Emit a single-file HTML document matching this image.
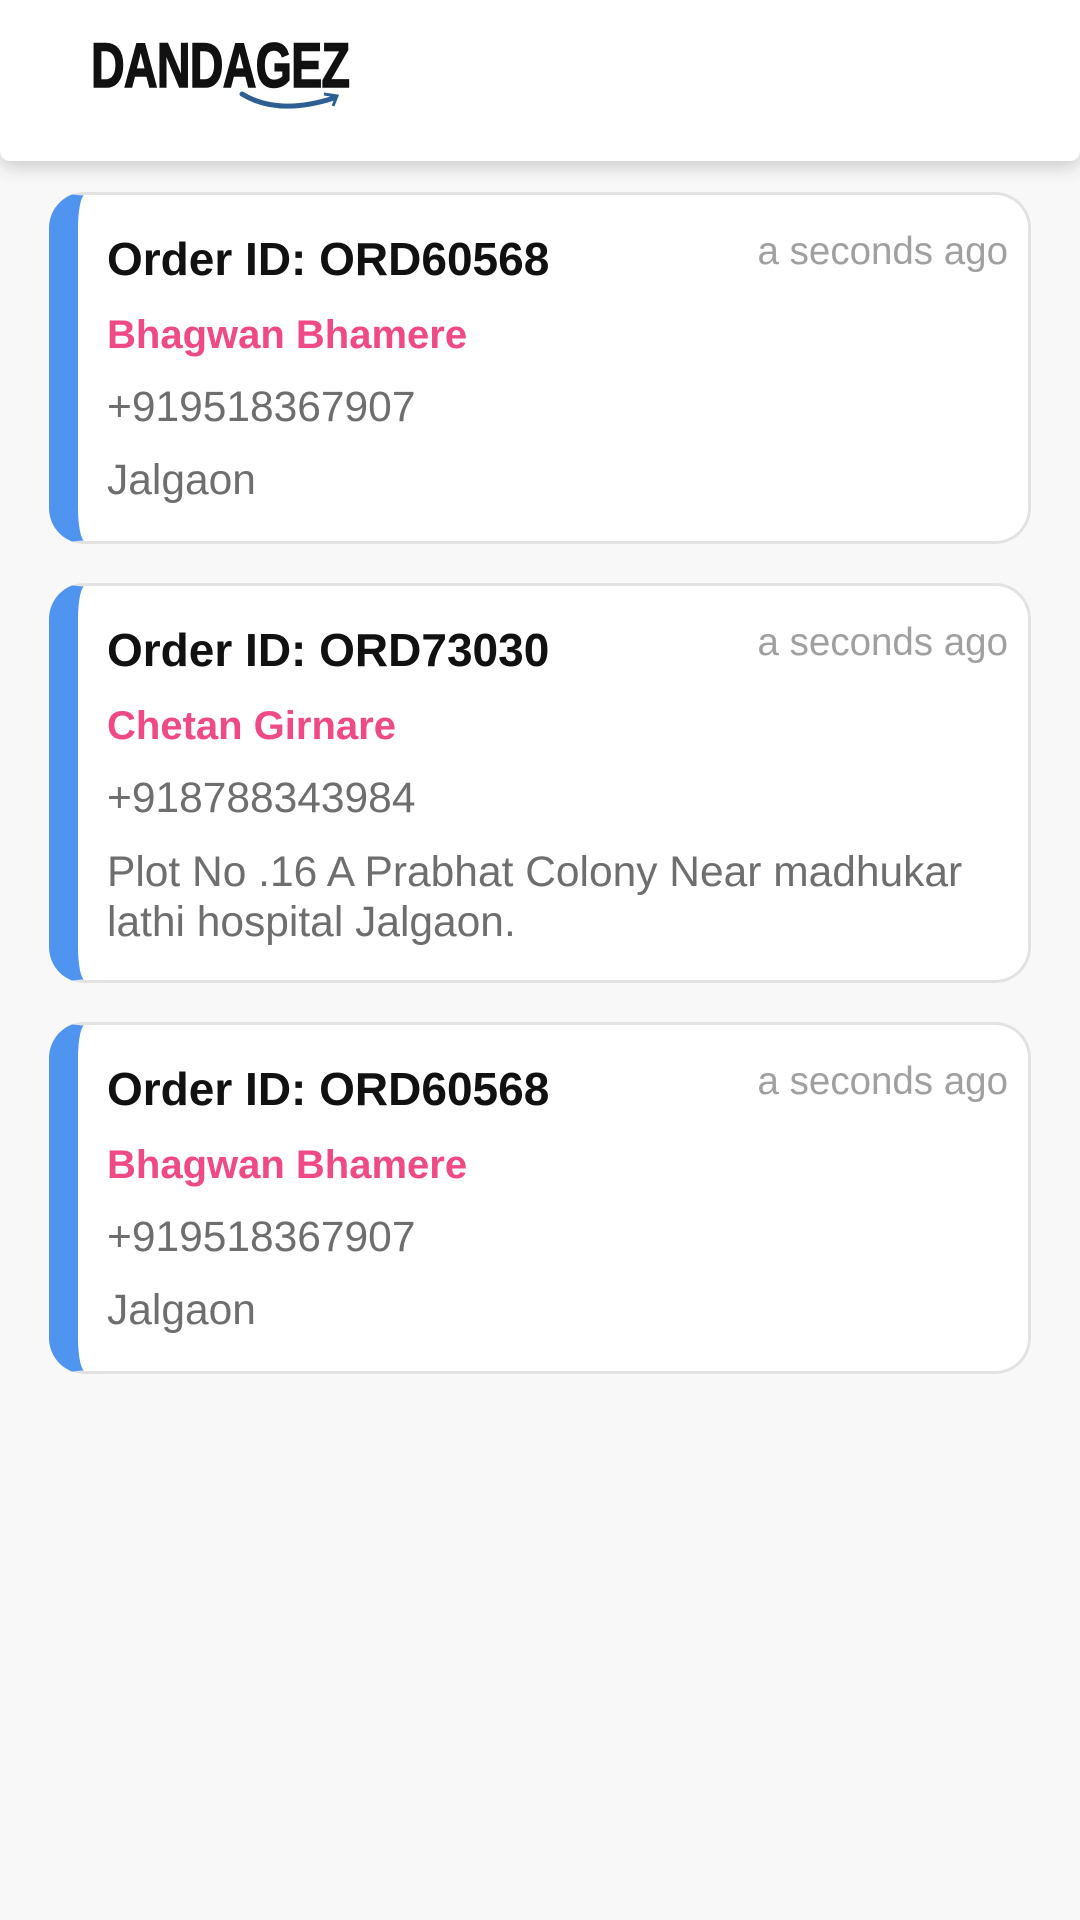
<!DOCTYPE html>
<html><head><meta charset="utf-8"><style>
body{margin:0;width:1080px;height:1920px;background:#f8f8f8;font-family:"Liberation Sans",sans-serif;position:relative;overflow:hidden}
.hdr{position:absolute;left:0;top:0;width:1080px;height:161px;background:#fff;border-radius:0 0 10px 10px;box-shadow:0 6px 18px rgba(0,0,0,.18)}
.logo{position:absolute;left:91px;top:30px;font-size:63px;font-weight:bold;color:#111;letter-spacing:-1px;transform:scaleX(.74);transform-origin:left;-webkit-text-stroke:1.5px #111}
.card{position:absolute;left:49px;width:982px;background:#fff;border:3px solid #e2e2e2;border-left:29px solid #4f94ef;border-radius:36px;box-sizing:border-box}
.oid{position:absolute;left:29px;top:37px;font-size:46px;font-weight:bold;color:#111}
.time{position:absolute;right:20px;top:35px;font-size:38.5px;color:#a0a0a0}
.name{position:absolute;left:29px;top:118px;font-size:40px;font-weight:bold;color:#ef4a86}
.ph{position:absolute;left:29px;top:189px;font-size:42.5px;color:#6e6e6e}
.ad{position:absolute;left:29px;top:261px;font-size:42.5px;color:#6e6e6e;line-height:50px;width:920px}
</style></head><body>
<div class="hdr"><div class="logo">DANDAGEZ</div>
<svg style="position:absolute;left:238px;top:90px" width="110" height="24" viewBox="0 0 110 24"><path d="M4 4 Q40 26 96 8" stroke="#2d5f93" stroke-width="5" fill="none" stroke-linecap="round"/><path d="M86 4 L99 6 L95 16" stroke="#2d5f93" stroke-width="3" fill="none"/></svg></div>
<div class="card" style="top:192px;height:352px"><div class="oid">Order ID: ORD60568</div><div class="time">a seconds ago</div><div class="name">Bhagwan Bhamere</div><div class="ph">+919518367907</div><div class="ad">Jalgaon</div></div>
<div class="card" style="top:583px;height:400px"><div class="oid">Order ID: ORD73030</div><div class="time">a seconds ago</div><div class="name">Chetan Girnare</div><div class="ph">+918788343984</div><div class="ad" style="top:262px">Plot No .16 A Prabhat Colony Near madhukar lathi hospital Jalgaon.</div></div>
<div class="card" style="top:1022px;height:352px"><div class="oid">Order ID: ORD60568</div><div class="time">a seconds ago</div><div class="name">Bhagwan Bhamere</div><div class="ph">+919518367907</div><div class="ad">Jalgaon</div></div>
</body></html>
